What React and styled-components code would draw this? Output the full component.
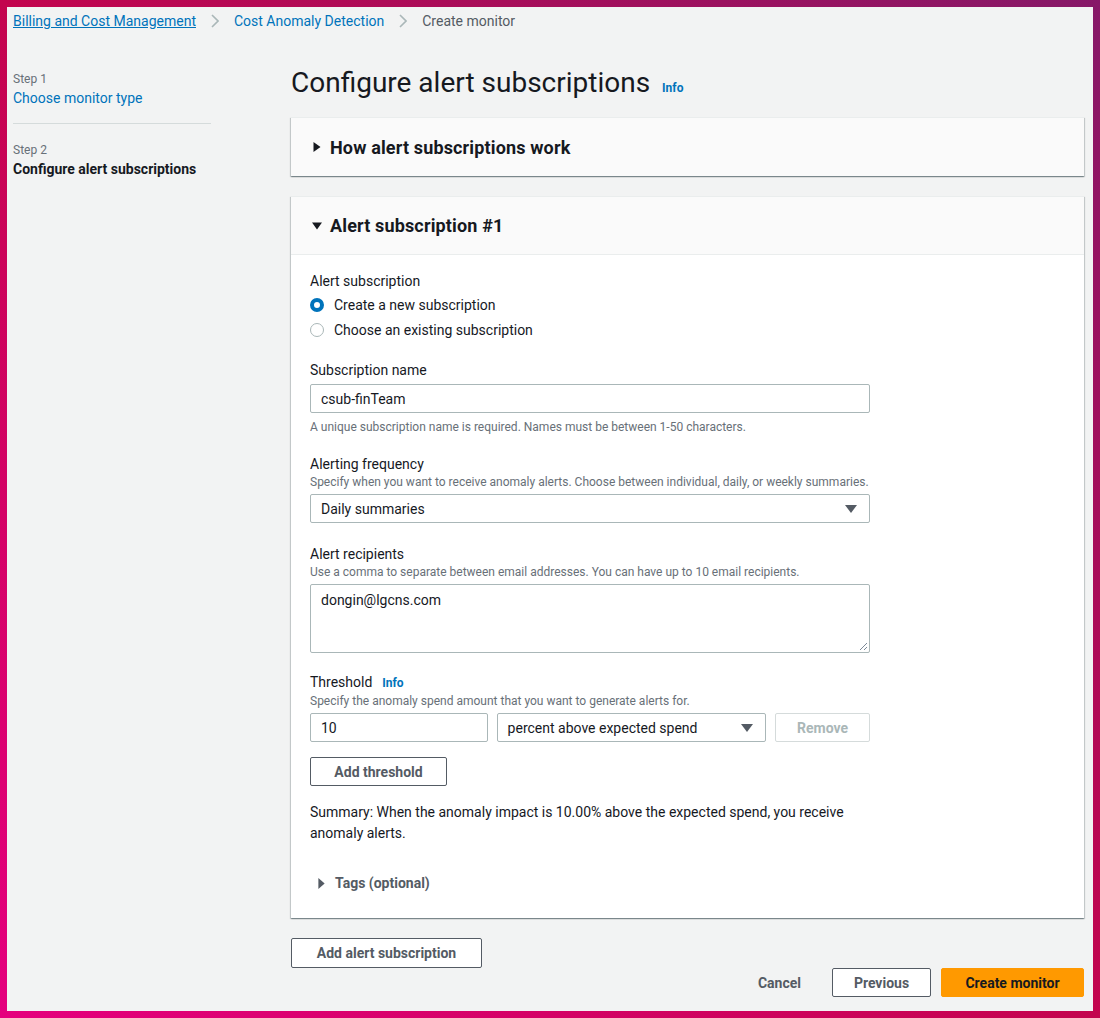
import React from "react";
import styled, { createGlobalStyle } from "styled-components";

const Global = createGlobalStyle`
  html, body { margin: 0; padding: 0; }
  body { font-family: Roboto, "Noto Sans", Arial, sans-serif; color: #16191f; }
  * { box-sizing: border-box; }
`;

const Frame = styled.div`
  width: 1100px;
  height: 1018px;
  padding: 7px;
  background: linear-gradient(to top right, #e5007e 0%, #c3044e 50%, #861868 100%);
`;

const Page = styled.div`
  height: 100%;
  background: #f2f3f3;
  padding: 4px 9px 0 6px;
  display: flex;
  flex-direction: column;
`;

const Breadcrumbs = styled.nav`
  display: flex;
  align-items: center;
  font-size: 14px;
  line-height: 20px;
  height: 20px;
`;

const Crumb = styled.a`
  color: ${(p) => (p.$current ? "#545b64" : "#0073bb")};
  text-decoration: ${(p) => (p.$underline ? "underline" : "none")};
`;

const Sep = styled.span`
  display: inline-flex;
  width: 38px;
  justify-content: center;
  color: #aab7b8;
`;

const Layout = styled.div`
  display: flex;
  margin-top: 40px;
`;

const SideNav = styled.aside`
  width: 198px;
  flex: none;
`;

const StepItem = styled.div`
  padding: ${(p) => (p.$first ? "0 0 14px" : "18px 0 0")};
  border-bottom: ${(p) => (p.$first ? "1px solid #d5dbdb" : "none")};
`;

const StepLabel = styled.div`
  font-size: 12px;
  line-height: 16px;
  color: #687078;
`;

const StepTitle = styled.div`
  font-size: 14px;
  line-height: 22px;
  color: ${(p) => (p.$active ? "#16191f" : "#0073bb")};
  font-weight: ${(p) => (p.$active ? 700 : 400)};
`;

const Main = styled.main`
  margin-left: 80px;
  width: 793px;
  display: flex;
  flex-direction: column;
`;

const TitleRow = styled.div`
  display: flex;
  align-items: baseline;
  gap: 12px;
  margin-top: -6px;
  margin-bottom: 16px;
`;

const Title = styled.h1`
  margin: 0;
  font-size: 28px;
  line-height: 36px;
  font-weight: 400;
  color: #16191f;
`;

const InfoLink = styled.a`
  font-size: 12px;
  font-weight: 700;
  color: #0073bb;
  text-decoration: none;
`;

const Panel = styled.section`
  background: #fff;
  box-shadow: 0 1px 1px 0 rgba(0, 28, 36, 0.3), 1px 1px 1px 0 rgba(0, 28, 36, 0.15),
    -1px 1px 1px 0 rgba(0, 28, 36, 0.15);
  border-top: 1px solid #eaeded;
  margin-bottom: 20px;
`;

const PanelHeader = styled.div`
  background: #fafafa;
  height: 58px;
  border-bottom: ${(p) => (p.$open ? "1px solid #eaeded" : "none")};
  display: flex;
  align-items: center;
  padding-left: 21px;
  gap: 8px;
  font-size: 18px;
  font-weight: 700;
  letter-spacing: 0.15px;
  color: #16191f;
`;

const Caret = ({ down, w = 10, h = 10, color = "#16191f" }) => (
  <svg width={w} height={h} viewBox="0 0 10 10" preserveAspectRatio="none" style={{ flex: "none" }}>
    {down ? (
      <path d="M0 1.5 L10 1.5 L5 8.5 Z" fill={color} />
    ) : (
      <path d="M1.5 0 L8.5 5 L1.5 10 Z" fill={color} />
    )}
  </svg>
);

const PanelBody = styled.div`
  padding: 16px 20px 27px 19px;
  display: flex;
  flex-direction: column;
`;

const Field = styled.div`
  display: flex;
  flex-direction: column;
  width: 560px;
  margin-top: ${(p) => p.$mt ?? 20}px;
`;

const Label = styled.div`
  font-size: 14px;
  line-height: 20px;
  color: #16191f;
  display: flex;
  align-items: baseline;
  gap: 10px;
`;

const Desc = styled.div`
  font-size: 12px;
  line-height: 16px;
  color: #687078;
  white-space: nowrap;
`;

const Hint = styled(Desc)`
  margin-top: 6px;
`;

const RadioRow = styled.label`
  display: flex;
  align-items: center;
  gap: 10px;
  font-size: 14px;
  line-height: 22px;
  margin-top: 3px;
`;

const RadioCircle = styled.span`
  width: 14px;
  height: 14px;
  border-radius: 50%;
  flex: none;
  background: #fff;
  border: ${(p) => (p.$checked ? "4px solid #0073bb" : "1px solid #aab7b8")};
`;

const Input = styled.div`
  margin-top: 4px;
  height: 29px;
  border: 1px solid #aab7b8;
  border-radius: 2px;
  background: #fff;
  padding: 0 10px;
  display: flex;
  align-items: center;
  font-size: 14px;
  color: #16191f;
  width: ${(p) => p.$w || "100%"};
`;

const SelectBox = styled(Input)`
  justify-content: space-between;
  padding-right: 12px;
`;

const TextArea = styled.div`
  margin-top: 4px;
  height: 69px;
  border: 1px solid #aab7b8;
  border-radius: 2px;
  padding: 6px 10px;
  font-size: 14px;
  line-height: 18px;
  position: relative;
`;

const Grip = styled.svg`
  position: absolute;
  right: 1px;
  bottom: 1px;
`;

const ThresholdRow = styled.div`
  display: flex;
  gap: 9px;
  margin-top: 4px;
  & > * { margin-top: 0; }
`;

const Button = styled.button`
  font-family: inherit;
  font-size: 14px;
  font-weight: 700;
  height: ${(p) => p.$h || 29}px;
  padding: 0 ${(p) => p.$px ?? 20}px;
  border-radius: 2px;
  cursor: pointer;
  background: ${(p) => (p.$primary ? "#ff9900" : p.$plain ? "transparent" : "#fff")};
  color: ${(p) => (p.$disabled ? "#aab7b8" : p.$primary ? "#16191f" : "#545b64")};
  border: 1px solid
    ${(p) => (p.$primary ? "#ff9900" : p.$plain ? "transparent" : p.$disabled ? "#d5dbdb" : "#545b64")};
  width: ${(p) => (p.$w ? `${p.$w}px` : "auto")};
  margin-top: ${(p) => p.$mt ?? 0}px;
  align-self: flex-start;
  flex: none;
`;

const Summary = styled.p`
  margin: 16px 0 0;
  font-size: 14px;
  line-height: 21px;
  width: 560px;
`;

const Tags = styled.div`
  margin-top: 31px;
  margin-left: 7px;
  display: flex;
  align-items: center;
  gap: 9px;
  font-size: 14px;
  font-weight: 700;
  color: #545b64;
`;

const Footer = styled.div`
  display: flex;
  justify-content: flex-end;
  align-items: center;
  gap: 10px;
`;

const Arrow = () => (
  <svg width="12" height="10" viewBox="0 0 12 10">
    <path d="M0 1 L12 1 L6 9 Z" fill="#545b64" />
  </svg>
);

const Chevron = () => (
  <svg width="8" height="14" viewBox="0 0 8 14">
    <path d="M1 1 L7 7 L1 13" stroke="#aab7b8" strokeWidth="1.6" fill="none" />
  </svg>
);

export default function App() {
  return (
    <Frame>
      <Global />
      <Page>
        <Breadcrumbs>
          <Crumb $underline>Billing and Cost Management</Crumb>
          <Sep><Chevron /></Sep>
          <Crumb>Cost Anomaly Detection</Crumb>
          <Sep><Chevron /></Sep>
          <Crumb $current>Create monitor</Crumb>
        </Breadcrumbs>
        <Layout>
          <SideNav>
            <StepItem $first>
              <StepLabel>Step 1</StepLabel>
              <StepTitle>Choose monitor type</StepTitle>
            </StepItem>
            <StepItem>
              <StepLabel>Step 2</StepLabel>
              <StepTitle $active>Configure alert subscriptions</StepTitle>
            </StepItem>
          </SideNav>
          <Main>
            <TitleRow>
              <Title>Configure alert subscriptions</Title>
              <InfoLink>Info</InfoLink>
            </TitleRow>
            <Panel>
              <PanelHeader>
                <Caret />
                How alert subscriptions work
              </PanelHeader>
            </Panel>
            <Panel>
              <PanelHeader $open>
                <Caret down />
                Alert subscription #1
              </PanelHeader>
              <PanelBody>
                <Field $mt={0}>
                  <Label>Alert subscription</Label>
                  <RadioRow>
                    <RadioCircle $checked />
                    Create a new subscription
                  </RadioRow>
                  <RadioRow>
                    <RadioCircle />
                    Choose an existing subscription
                  </RadioRow>
                </Field>
                <Field $mt={19}>
                  <Label>Subscription name</Label>
                  <Input>csub-finTeam</Input>
                  <Hint>A unique subscription name is required. Names must be between 1-50 characters.</Hint>
                </Field>
                <Field $mt={19}>
                  <Label>Alerting frequency</Label>
                  <Desc>Specify when you want to receive anomaly alerts. Choose between individual, daily, or weekly summaries.</Desc>
                  <SelectBox>
                    Daily summaries
                    <Arrow />
                  </SelectBox>
                </Field>
                <Field $mt={21}>
                  <Label>Alert recipients</Label>
                  <Desc>Use a comma to separate between email addresses. You can have up to 10 email recipients.</Desc>
                  <TextArea>
                    dongin@lgcns.com
                    <Grip width="10" height="10" viewBox="0 0 10 10">
                      <path d="M9 2 L2 9 M9 6 L6 9" stroke="#7d8998" strokeWidth="1" />
                    </Grip>
                  </TextArea>
                </Field>
                <Field $mt={19}>
                  <Label>
                    Threshold <InfoLink>Info</InfoLink>
                  </Label>
                  <Desc>Specify the anomaly spend amount that you want to generate alerts for.</Desc>
                  <ThresholdRow>
                    <Input $w="178px">10</Input>
                    <SelectBox $w="270px">
                      percent above expected spend
                      <Arrow />
                    </SelectBox>
                    <Button $disabled $w={95}>Remove</Button>
                  </ThresholdRow>
                </Field>
                <Button $w={137} $mt={15}>Add threshold</Button>
                <Summary>
                  Summary: When the anomaly impact is 10.00% above the expected spend, you receive anomaly alerts.
                </Summary>
                <Tags>
                  <Caret w={9} h={11} color="#545b64" />
                  Tags (optional)
                </Tags>
              </PanelBody>
            </Panel>
            <Button $w={191} $h={30}>Add alert subscription</Button>
            <Footer>
              <Button $plain $px={20}>Cancel</Button>
              <Button $w={99}>Previous</Button>
              <Button $primary $w={143}>Create monitor</Button>
            </Footer>
          </Main>
        </Layout>
      </Page>
    </Frame>
  );
}
